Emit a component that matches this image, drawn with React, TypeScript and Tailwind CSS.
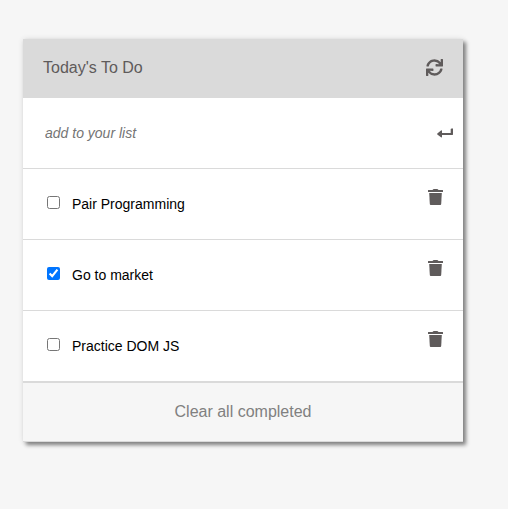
import { useState } from 'react';
import { FaSync } from 'react-icons/fa';

type Task = { id: string; label: string; completed: boolean };

const initialTasks: Task[] = [
  { id: 'pair', label: 'Pair Programming', completed: false },
  { id: 'market', label: 'Go to market', completed: true },
  { id: 'dom', label: 'Practice DOM JS', completed: false },
];

function EnterIcon() {
  return (
    <svg viewBox="0 0 16 10" className="h-2.5 w-4" fill="currentColor" aria-hidden="true">
      <path d="M13.7 1 14.5 0.4H16V6.5L15.5 7H5V8.7Q5 9.8 4 9.2L0.3 6.4Q0 6 0.3 5.6L4 2.4Q5 1.8 5 3V5H13.7Z" />
    </svg>
  );
}

function TrashIcon() {
  return (
    <svg viewBox="0 0 15 16" className="h-4 w-[15px]" fill="currentColor" aria-hidden="true">
      <path d="M0 1.3Q0 1 .4 1H4.5L5.2 .3Q5.5 0 6 0H9Q9.5 0 9.8 .3L10.5 1H14.6Q15 1 15 1.3V3H0Z" />
      <path d="M1.2 4H13.8L13.2 15Q13.1 16 12.3 16H2.7Q1.9 16 1.8 15Z" />
    </svg>
  );
}

export default function App() {
  const [tasks, setTasks] = useState(initialTasks);
  const [draft, setDraft] = useState('');

  const toggle = (id: string) =>
    setTasks(tasks.map((t) => (t.id === id ? { ...t, completed: !t.completed } : t)));

  return (
    <div className="min-h-screen bg-[#f6f6f6] pt-[39px] pr-[45px] pb-10 pl-[23px] font-['Liberation_Sans',Arial,sans-serif]">
      <main className="bg-white shadow-[3px_3px_4px_#808080,0_0_5px_#dddddd]">
        <header className="flex h-[59px] items-center justify-between bg-[#dadada] px-5 pb-0.5 text-[#5f5b5b]">
          <h1 className="text-base">Today's To Do</h1>
          <button type="button" aria-label="Refresh">
            <FaSync className="size-[17px]" />
          </button>
        </header>

        <form
          className="flex h-[71px] items-center border-b border-[#dadada] pr-2.5 pl-[22px]"
          onSubmit={(e) => {
            e.preventDefault();
            if (!draft.trim()) return;
            setTasks([...tasks, { id: String(Date.now()), label: draft, completed: false }]);
            setDraft('');
          }}
        >
          <input
            type="text"
            aria-label="New task"
            placeholder="add to your list"
            value={draft}
            onChange={(e) => setDraft(e.target.value)}
            className="min-w-0 flex-1 text-sm italic outline-none placeholder:text-[#757575]"
          />
          <button type="submit" aria-label="Add task" className="text-[#5f5b5b]">
            <EnterIcon />
          </button>
        </form>

        <ul>
          {tasks.map((task) => (
            <li
              key={task.id}
              className="flex h-[71px] items-center justify-between border-b border-[#dadada] pr-5 pl-6"
            >
              <div className="flex items-center gap-3">
                <input
                  id={task.id}
                  type="checkbox"
                  checked={task.completed}
                  onChange={() => toggle(task.id)}
                  className="mb-1 size-[13px]"
                />
                <label htmlFor={task.id} className="text-sm text-black">
                  {task.label}
                </label>
              </div>
              <button
                type="button"
                aria-label={`Delete ${task.label}`}
                onClick={() => setTasks(tasks.filter((t) => t.id !== task.id))}
                className="mb-3.5 text-[#5f5b5b]"
              >
                <TrashIcon />
              </button>
            </li>
          ))}
        </ul>

        <button
          type="button"
          onClick={() => setTasks(tasks.filter((t) => !t.completed))}
          className="h-[60px] w-full border-y border-[#dadada] bg-[#f6f6f6] text-base text-[#808080]"
        >
          Clear all completed
        </button>
      </main>
    </div>
  );
}
